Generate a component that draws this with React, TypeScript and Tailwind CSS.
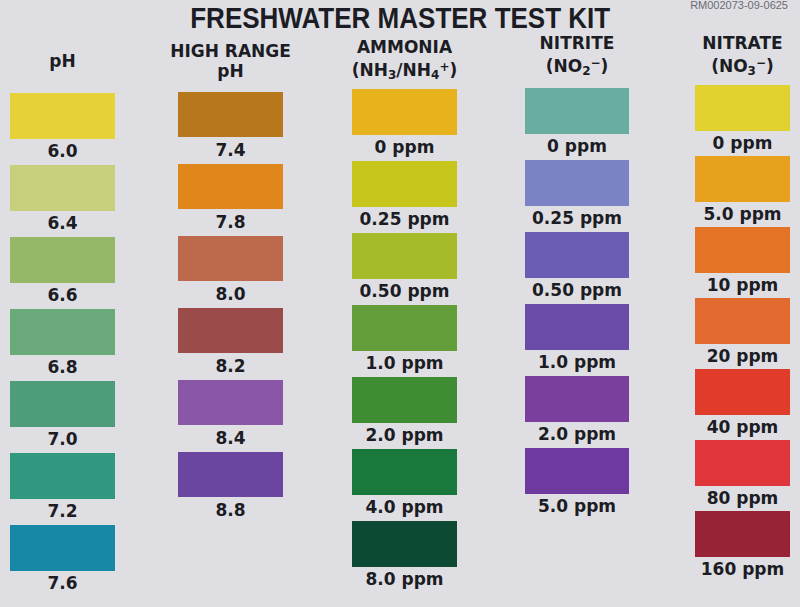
import type { ReactNode } from 'react'

type Chip = { label: string; color: string }

type Column = {
  key: string
  head: ReactNode
  wrap: string
  gap: string
  swatch: string
  row: string
  chips: Chip[]
}

const sub = (s: string) => <span className="text-[12px] align-[-3px]">{s}</span>
const sup = (s: string) => <span className="text-[12px] align-[5px]">{s}</span>

const columns: Column[] = [
  {
    key: 'ph',
    head: <p>pH</p>,
    wrap: 'w-[105px] pt-[4px]',
    gap: 'mt-[12px]',
    swatch: 'w-[105px] h-[46px]',
    row: 'h-[26px]',
    chips: [
      { label: '6.0', color: '#e6d138' },
      { label: '6.4', color: '#c8cf7c' },
      { label: '6.6', color: '#94b865' },
      { label: '6.8', color: '#6aa97a' },
      { label: '7.0', color: '#4e9d7a' },
      { label: '7.2', color: '#2f987e' },
      { label: '7.6', color: '#1787a6' },
    ],
  },
  {
    key: 'hr',
    head: (
      <>
        <p>HIGH RANGE</p>
        <p>pH</p>
      </>
    ),
    wrap: 'w-[105px] pt-[4px] ml-[63px]',
    gap: 'mt-[11px]',
    swatch: 'w-[105px] h-[45px]',
    row: 'h-[27px]',
    chips: [
      { label: '7.4', color: '#b7771c' },
      { label: '7.8', color: '#df871b' },
      { label: '8.0', color: '#bd6a4c' },
      { label: '8.2', color: '#9a4b4a' },
      { label: '8.4', color: '#8957a5' },
      { label: '8.8', color: '#6a46a0' },
    ],
  },
  {
    key: 'nh',
    head: (
      <>
        <p>AMMONIA</p>
        <p>
          (NH{sub('3')}/NH{sub('4')}
          {sup('+')})
        </p>
      </>
    ),
    wrap: 'w-[105px] pt-[4px] ml-[69px]',
    gap: 'mt-[8px]',
    swatch: 'w-[105px] h-[46px]',
    row: 'h-[26px]',
    chips: [
      { label: '0 ppm', color: '#e6b31c' },
      { label: '0.25 ppm', color: '#c6c61c' },
      { label: '0.50 ppm', color: '#a6ba2a' },
      { label: '1.0 ppm', color: '#639e3a' },
      { label: '2.0 ppm', color: '#3e8d35' },
      { label: '4.0 ppm', color: '#19783c' },
      { label: '8.0 ppm', color: '#0d4a33' },
    ],
  },
  {
    key: 'no2',
    head: (
      <>
        <p>NITRITE</p>
        <p>
          (NO{sub('2')}
          {sup('−')})
        </p>
      </>
    ),
    wrap: 'w-[104px] ml-[68px]',
    gap: 'mt-[11px]',
    swatch: 'w-[104px] h-[46px]',
    row: 'h-[26px]',
    chips: [
      { label: '0 ppm', color: '#69ada1' },
      { label: '0.25 ppm', color: '#7b83c6' },
      { label: '0.50 ppm', color: '#6a5db3' },
      { label: '1.0 ppm', color: '#6a4ba8' },
      { label: '2.0 ppm', color: '#7a3f9c' },
      { label: '5.0 ppm', color: '#6e3a9f' },
    ],
  },
  {
    key: 'no3',
    head: (
      <>
        <p>NITRATE</p>
        <p>
          (NO{sub('3')}
          {sup('−')})
        </p>
      </>
    ),
    wrap: 'w-[95px] ml-[66px]',
    gap: 'mt-[8px]',
    swatch: 'w-[95px] h-[46px]',
    row: 'h-[25px]',
    chips: [
      { label: '0 ppm', color: '#e1d12e' },
      { label: '5.0 ppm', color: '#e7a11d' },
      { label: '10 ppm', color: '#e57326' },
      { label: '20 ppm', color: '#e36a2e' },
      { label: '40 ppm', color: '#e13b2b' },
      { label: '80 ppm', color: '#df353b' },
      { label: '160 ppm', color: '#982337' },
    ],
  },
]

export default function App() {
  return (
    <div className="w-[800px] h-[607px] overflow-hidden bg-[#dfdfe3] text-[#1c1c24] font-['DejaVu_Sans',sans-serif]">
      {/* Title */}
      <div className="relative h-[37px] flex justify-center">
        <h1 className="inline-block scale-x-[0.867] text-[30px] leading-[34px] pt-[1px] font-bold whitespace-nowrap font-['Liberation_Sans',sans-serif]">
          FRESHWATER MASTER TEST KIT
        </h1>
        <span className="absolute right-[12px] top-0 text-[11px] leading-[11px] text-[#6b6b73] font-['Liberation_Sans',sans-serif]">
          RM002073-09-0625
        </span>
      </div>

      {/* Chart columns */}
      <div className="flex pl-[10px]">
        {columns.map(col => (
          <div key={col.key} className={`flex flex-col items-center ${col.wrap}`}>
            <div className="h-[40px] flex flex-col justify-center items-center whitespace-nowrap text-[17px] leading-[20px] font-bold">
              {col.head}
            </div>
            <div className={col.gap}>
              {col.chips.map(c => (
                <div key={c.label} className="flex flex-col items-center">
                  <div className={col.swatch} style={{ background: c.color }} />
                  <p className={`${col.row} flex items-center whitespace-nowrap text-[17px] font-bold`}>{c.label}</p>
                </div>
              ))}
            </div>
          </div>
        ))}
      </div>
    </div>
  )
}
